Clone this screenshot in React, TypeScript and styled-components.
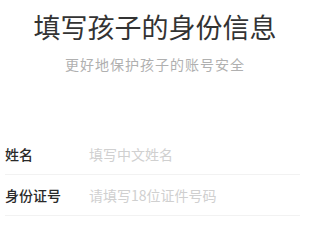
import React from "react";
import styled, { createGlobalStyle } from "styled-components";

const Global = createGlobalStyle`
  html, body { margin: 0; padding: 0; background: #ffffff; }
  body { font-family: "Noto Sans CJK SC", "Noto Sans", sans-serif; }
`;

const Page = styled.div`
  width: 300px;
  height: 224px;
  overflow: hidden;
  background: #ffffff;
`;

const Header = styled.header`
  display: flex;
  flex-direction: column;
  align-items: center;
  padding: 12px 0 0 10px;
`;

const Title = styled.h1`
  margin: 0;
  font-size: 27px;
  line-height: 30px;
  font-weight: 400;
  color: #333333;
  white-space: nowrap;
`;

const Subtitle = styled.p`
  margin: 12px 0 0;
  font-size: 14px;
  line-height: 20px;
  letter-spacing: 1px;
  color: #b0b0b0;
  white-space: nowrap;
`;

const Form = styled.div`
  display: flex;
  flex-direction: column;
  margin-top: 60px;
  padding-left: 5px;
`;

const Row = styled.div`
  display: flex;
  align-items: center;
  height: 40px;
  border-bottom: 1px solid #f2f2f2;
`;

const Label = styled.span`
  width: 84px;
  flex: none;
  font-size: 14px;
  font-weight: 500;
  color: #2a2a2a;
  white-space: nowrap;
`;

const Placeholder = styled.span`
  font-size: 14px;
  color: #d0d0d0;
  white-space: nowrap;
`;

export default function App() {
  return (
    <Page>
      <Global />
      <Header>
        <Title>填写孩子的身份信息</Title>
        <Subtitle>更好地保护孩子的账号安全</Subtitle>
      </Header>
      <Form>
        <Row>
          <Label>姓名</Label>
          <Placeholder>填写中文姓名</Placeholder>
        </Row>
        <Row>
          <Label>身份证号</Label>
          <Placeholder>请填写18位证件号码</Placeholder>
        </Row>
      </Form>
    </Page>
  );
}
